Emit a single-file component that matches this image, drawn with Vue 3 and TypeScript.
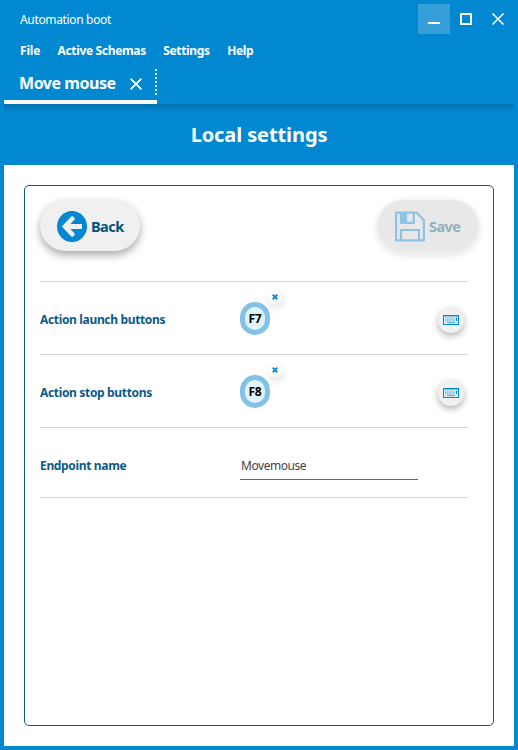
<script setup lang="ts">
const menu: string[] = ['File', 'Active Schemas', 'Settings', 'Help']

interface HotkeyRow {
  label: string
  key: string
}

const hotkeys: HotkeyRow[] = [
  { label: 'Action launch buttons', key: 'F7' },
  { label: 'Action stop buttons', key: 'F8' },
]
</script>

<template>
  <div class="window">
    <header class="header">
      <div class="titlebar">
        <span class="app-title">Automation boot</span>
        <div class="controls">
          <button class="control active" aria-label="Minimize">
            <svg width="32" height="30" viewBox="0 0 32 30"><path d="M10 18h12v2H10z" fill="#fff" /></svg>
          </button>
          <button class="control" aria-label="Maximize">
            <svg width="32" height="30" viewBox="0 0 32 30"><rect x="11" y="10" width="10" height="10" fill="none" stroke="#fff" stroke-width="2" /></svg>
          </button>
          <button class="control" aria-label="Close">
            <svg width="32" height="30" viewBox="0 0 32 30"><path d="M10.5 9.5l11 11M21.5 9.5l-11 11" stroke="#fff" stroke-width="1.6" /></svg>
          </button>
        </div>
      </div>
      <nav class="menu">
        <a v-for="item in menu" :key="item" class="menu-item">{{ item }}</a>
      </nav>
      <div class="tab">
        <span class="tab-label">Move mouse</span>
        <svg class="tab-close" width="12" height="12" viewBox="0 0 12 12"><path d="M.6.6l10.8 10.8M11.4.6L.6 11.4" stroke="#fff" stroke-width="1.7" /></svg>
        <svg class="tab-divider" width="2" height="28" viewBox="0 0 2 28"><path d="M1 0v28" stroke="#d5ecf8" stroke-width="2" stroke-dasharray="2 2" /></svg>
      </div>
    </header>

    <h1 class="heading">Local settings</h1>

    <main class="content">
      <section class="card">
        <div class="actions">
          <button class="pill">
            <svg width="30" height="31" viewBox="0 0 30 31">
              <ellipse cx="15" cy="15.5" rx="15" ry="15.4" fill="#0288d1" />
              <path d="M4.8 15.5L14.3 5.6Q15.3 4.7 16.3 5.6L17.4 6.7Q18.3 7.7 17.4 8.7L13.4 13H25V18H13.4L17.4 22.3Q18.3 23.3 17.4 24.3L16.3 25.4Q15.3 26.3 14.3 25.4Z" fill="#f0f0f0" />
            </svg>
            <span class="pill-text">Back</span>
          </button>
          <button class="pill disabled" disabled>
            <svg width="30" height="31" viewBox="0 0 30 31">
              <g fill="none" stroke="#8ec4e3" stroke-width="2.2">
                <path d="M1.1 1.6h20.4L28.9 9v20.4H1.1z" stroke-linejoin="round" />
                <path d="M6 1.5v10.4h12.8V1.5M6 29.5V19h18v10.5" />
              </g>
              <path d="M6 1h6.2v11H6z" fill="#8ec4e3" />
            </svg>
            <span class="pill-text">Save</span>
          </button>
        </div>

        <div v-for="row in hotkeys" :key="row.key" class="row">
          <span class="label">{{ row.label }}</span>
          <div class="key-slot">
            <div class="key"><span>{{ row.key }}</span></div>
            <button class="remove" aria-label="Remove">
              <svg width="6" height="6" viewBox="0 0 6 6"><path d="M.7.7l4.6 4.6M5.3.7L.7 5.3" stroke="#0288d1" stroke-width="1.9" /></svg>
            </button>
          </div>
          <button class="record" aria-label="Record keys">
            <svg width="16" height="10" viewBox="0 0 16 10">
              <rect x=".5" y=".5" width="15" height="9" fill="#e3f0f8" stroke="#0288d1" />
              <path d="M1 1.3h14" stroke="#0288d1" stroke-opacity=".45" />
              <path d="M2 3h10M2 4.6h10" stroke="#0288d1" stroke-opacity=".35" stroke-width="1.4" stroke-dasharray="1.6 .4" />
              <path d="M2 6h10" stroke="#0288d1" stroke-opacity=".55" stroke-dasharray="1.4 .6" />
              <path d="M4 7.6h8" stroke="#0288d1" stroke-opacity=".7" />
              <path d="M13.5 2.6v3.4" stroke="#0288d1" stroke-width="1.2" />
            </svg>
          </button>
        </div>

        <div class="row endpoint">
          <span class="label">Endpoint name</span>
          <div class="field">Movemouse</div>
        </div>
      </section>
    </main>
  </div>
</template>

<style>
body {
  margin: 0;
}
</style>

<style scoped>
.window {
  box-sizing: border-box;
  width: 518px;
  height: 750px;
  padding: 4px;
  display: flex;
  flex-direction: column;
  background: #0288d1;
  color: #fff;
  font-family: "Noto Sans", "Open Sans", sans-serif;
  font-size: 12px;
  letter-spacing: -0.34px;
  overflow: hidden;
}
button {
  border: 0;
  padding: 0;
  margin: 0;
  background: none;
  font: inherit;
}
svg {
  display: block;
  flex: none;
}
span,
a {
  white-space: nowrap;
}
.header {
  height: 100px;
  flex: none;
  display: flex;
  flex-direction: column;
}
.titlebar {
  display: flex;
  justify-content: space-between;
  height: 30px;
  padding-left: 16px;
}
.app-title {
  line-height: 31px;
}
.controls {
  display: flex;
}
.control {
  width: 32px;
  height: 30px;
}
.control.active {
  background: #369fda;
}
.menu {
  display: flex;
  gap: 17.4px;
  height: 32px;
  padding-left: 16px;
  line-height: 33px;
  font-weight: 700;
}
.menu-item:first-child {
  letter-spacing: -0.2px;
}
.tab {
  box-sizing: border-box;
  width: 153px;
  height: 38px;
  padding-left: 15px;
  display: flex;
  align-items: center;
  border-bottom: 4px solid #fff;
}
.tab-label {
  width: 111px;
  font-size: 16px;
  font-weight: 700;
  letter-spacing: -0.45px;
}
.tab-close {
  margin-top: 1px;
}
.tab-divider {
  margin-left: 13px;
}
.heading {
  height: 61px;
  flex: none;
  margin: 0;
  font-size: 20px;
  line-height: 61px;
  letter-spacing: -0.1px;
  text-align: center;
  background: linear-gradient(#0270ac, #0281c6 5px, #0288d1 9px);
}
.content {
  flex: 1;
  box-sizing: border-box;
  padding: 20px;
  background: #fff;
}
.card {
  box-sizing: border-box;
  height: 541px;
  padding: 15px 25px 0 15px;
  border: 1px solid #0b5a85;
  border-radius: 5px;
  color: #0b5a85;
}
.actions {
  height: 80px;
  margin-right: -10px;
  display: flex;
  justify-content: space-between;
  align-items: flex-start;
}
.pill {
  width: 100px;
  height: 51px;
  margin-top: -1px;
  padding-left: 17px;
  display: flex;
  align-items: center;
  gap: 4px;
  border-radius: 26px;
  background: #f0f0f0;
  box-shadow: 0 4px 9px rgba(0, 0, 0, 0.34);
}
.pill svg {
  margin-top: 2px;
}
.pill-text {
  font-size: 14.5px;
  font-weight: 700;
  letter-spacing: -0.55px;
  color: #02517d;
}
.pill.disabled {
  background: #e8e8e8;
  box-shadow: 0 2px 7px 1px #e8e8e8, 0 4px 9px rgba(0, 0, 0, 0.07);
}
.disabled .pill-text {
  color: #94afbe;
}
.row {
  box-sizing: border-box;
  height: 73px;
  border-top: 1px solid #d5d5d5;
  display: grid;
  grid-template-columns: 200px 1fr auto;
  align-items: center;
}
.label {
  font-weight: 700;
  padding-top: 3px;
}
.key-slot {
  position: relative;
}
.key {
  box-sizing: border-box;
  width: 30px;
  height: 33px;
  border: 5px solid #83c1e7;
  border-radius: 15px;
  background: #e1f3fc;
  display: flex;
  align-items: center;
  justify-content: center;
  color: #000;
  font-weight: 700;
  letter-spacing: -0.2px;
}
.remove {
  position: absolute;
  left: 28px;
  top: -12px;
  width: 14px;
  height: 14px;
  border-radius: 50%;
  display: grid;
  place-items: center;
  background: #fff;
  background: radial-gradient(circle, #fff 40%, #f8f8f8 75%);
  box-shadow: 1px 4px 9px rgba(0, 0, 0, 0.13);
}
.record {
  width: 26px;
  height: 26px;
  margin: 4px 4px 0 0;
  border-radius: 50%;
  display: grid;
  place-items: center;
  background: #f0f0f0;
  box-shadow: 0 3px 7px rgba(0, 0, 0, 0.3);
}
.endpoint {
  height: 71px;
  border-bottom: 1px solid #d5d5d5;
}
.endpoint .label {
  padding-top: 5px;
}
.field {
  box-sizing: border-box;
  width: 178px;
  height: 28px;
  margin-top: 7px;
  padding-left: 1px;
  line-height: 27px;
  letter-spacing: -0.45px;
  border-bottom: 1px solid #0288d1;
  color: #444;
}
</style>
